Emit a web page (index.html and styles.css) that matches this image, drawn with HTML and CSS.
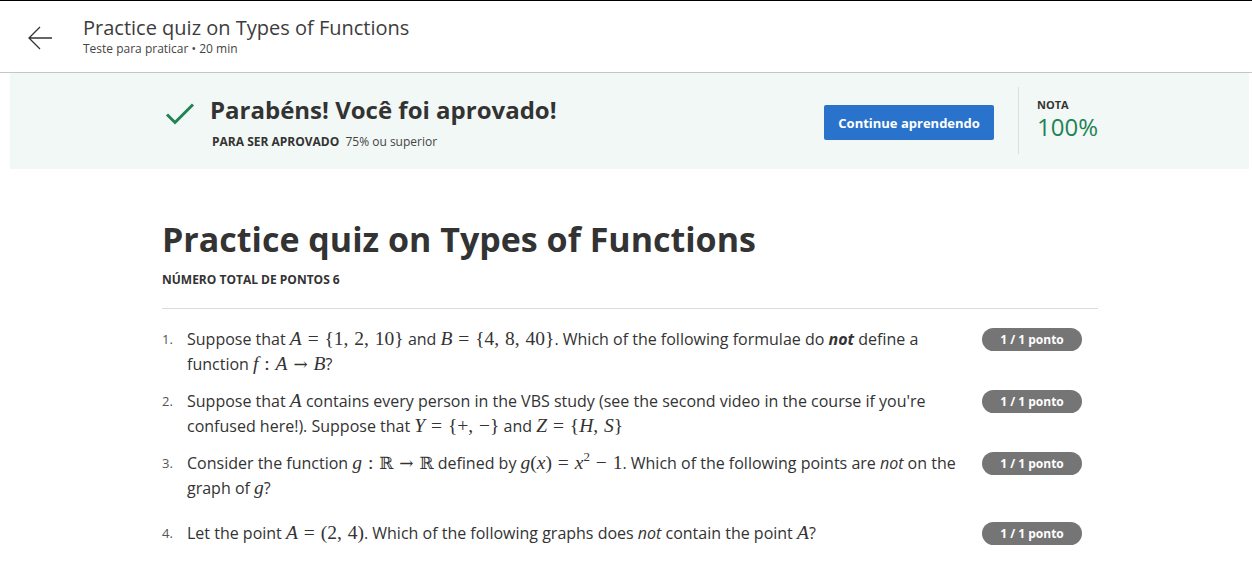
FILE: index.html
```html
<!DOCTYPE html>
<html lang="pt">
<head>
<meta charset="utf-8">
<title>Practice quiz on Types of Functions</title>
<link rel="stylesheet" href="styles.css">
</head>
<body>
<header class="topbar">
  <a class="back" aria-label="Voltar">
    <svg width="26" height="24" viewBox="0 0 26 24"><path d="M25 12H2M13 1L2 12l11 11" fill="none" stroke="#333" stroke-width="1.3"/></svg>
  </a>
  <div class="top-titles">
    <div class="top-title">Practice quiz on Types of Functions</div>
    <div class="top-sub">Teste para praticar • 20 min</div>
  </div>
</header>

<section class="banner">
  <div class="banner-inner">
    <div class="pass">
      <svg class="check" width="30" height="24" viewBox="0 0 30 24"><path d="M2 12.5l8 8L28 2.5" fill="none" stroke="#1f8354" stroke-width="3"/></svg>
      <div class="pass-text">
        <div class="pass-title">Parabéns! Você foi aprovado!</div>
        <div class="pass-req"><b>PARA SER APROVADO</b> 75% ou superior</div>
      </div>
    </div>
    <button class="continue">Continue aprendendo</button>
    <div class="divider"></div>
    <div class="grade">
      <div class="grade-label">NOTA</div>
      <div class="grade-value">100%</div>
    </div>
  </div>
</section>

<main class="content">
  <h1 class="quiz-title">Practice quiz on Types of Functions</h1>
  <div class="points">NÚMERO TOTAL DE PONTOS 6</div>
  <hr class="rule">
  <ol class="questions">
    <li class="q">
      <span class="num">1.</span>
      <div class="qtext">Suppose that <span class="m"><i>A</i> = {1, 2, 10}</span> and <span class="m"><i>B</i> = {4, 8, 40}</span>. Which of the following formulae do <b><i>not</i></b> define a function <span class="m"><i>f</i> : <i>A</i> <span class="arr">→</span> <i>B</i></span>?</div>
      <span class="badge">1 / 1 ponto</span>
    </li>
    <li class="q">
      <span class="num">2.</span>
      <div class="qtext">Suppose that <span class="m"><i>A</i></span> contains every person in the VBS study (see the second video in the course if you're confused here!). Suppose that <span class="m"><i>Y</i> = {+, −}</span> and <span class="m"><i>Z</i> = {<i>H</i>, <i>S</i>}</span></div>
      <span class="badge">1 / 1 ponto</span>
    </li>
    <li class="q q3">
      <span class="num">3.</span>
      <div class="qtext">Consider the function <span class="m"><i>g</i> : <span class="bb">ℝ</span> <span class="arr">→</span> <span class="bb">ℝ</span></span> defined by <span class="m"><i>g</i>(<i>x</i>) = <i>x</i><sup>2</sup> − 1</span>. Which of the following points are <i>not</i> on the graph of <span class="m"><i>g</i></span>?</div>
      <span class="badge">1 / 1 ponto</span>
    </li>
    <li class="q">
      <span class="num">4.</span>
      <div class="qtext">Let the point <span class="m"><i>A</i> = (2, 4)</span>. Which of the following graphs does <i>not</i> contain the point <span class="m"><i>A</i></span>?</div>
      <span class="badge">1 / 1 ponto</span>
    </li>
  </ol>
</main>
</body>
</html>
```

FILE: styles.css
```css
* { box-sizing: border-box; }
html, body { margin: 0; padding: 0; }
body {
  font-family: "Open Sans", "Liberation Sans", sans-serif;
  color: #333;
  background: #fff;
  border-top: 1px solid #000;
  width: 1252px;
  overflow: hidden;
}

.topbar {
  height: 72px;
  border-bottom: 1px solid #c6c6c6;
  display: flex;
  align-items: flex-start;
}
.back {
  display: block;
  margin: 25px 0 0 27px;
  width: 26px;
  height: 24px;
}
.back svg { display: block; }
.top-titles { margin: 14px 0 0 30px; }
.top-title {
  font-size: 20px;
  line-height: 26px;
  color: #3d3d3d;
}
.top-sub {
  font-size: 12px;
  line-height: 16px;
  color: #444;
}

.banner {
  margin: 0 3px 0 10px;
  height: 96px;
  background: #f2f8f6;
}
.banner-inner {
  width: 936px;
  margin: 0 0 0 152px;
  padding-left: 3px;
  height: 100%;
  display: flex;
  align-items: flex-start;
}
.pass {
  display: flex;
  align-items: flex-start;
  width: 660px;
}
.check { margin-top: 29px; display: block; }
.pass-text { margin: 20px 0 0 15px; }
.pass-title {
  font-size: 24px;
  font-weight: 700;
  line-height: 34px;
  color: #333;
}
.pass-req {
  font-size: 12px;
  line-height: 16px;
  margin: 7px 0 0 2px;
  color: #444;
}
.pass-req b { color: #333; margin-right: 3px; }
.continue {
  margin-top: 32px;
  width: 170px;
  height: 35px;
  border: none;
  border-radius: 2px;
  background: #2a73cc;
  color: #fff;
  font-family: "Open Sans", "Liberation Sans", sans-serif;
  font-size: 13px;
  font-weight: 700;
  padding: 0;
}
.divider {
  width: 1px;
  height: 67px;
  background: #dedede;
  margin: 14px 0 0 24px;
}
.grade { margin: 24px 0 0 18px; }
.grade-label {
  font-size: 11px;
  font-weight: 700;
  line-height: 16px;
  color: #333;
}
.grade-value {
  font-size: 24px;
  line-height: 28px;
  color: #1f8354;
}

.content {
  width: 936px;
  margin: 0 0 0 162px;
  padding-top: 46px;
}
.quiz-title {
  margin: 0;
  font-size: 34px;
  font-weight: 700;
  line-height: 48px;
  color: #333;
}
.points {
  font-size: 12px;
  font-weight: 700;
  line-height: 16px;
  margin-top: 9px;
  color: #333;
}
.rule {
  margin: 20px 0 0 0;
  border: none;
  border-top: 1px solid #dcdcdc;
  height: 0;
}
.questions {
  list-style: none;
  margin: 18px 0 0 0;
  padding: 0;
}
.q {
  display: flex;
  align-items: flex-start;
  margin-bottom: 12px;
}
.q3 { margin-bottom: 20px; }
.num {
  width: 25px;
  font-size: 13px;
  line-height: 25px;
  color: #555;
  flex: none;
}
.qtext {
  width: 790px;
  font-size: 16px;
  line-height: 25px;
  color: #333;
}
.badge {
  flex: none;
  margin: 1px 0 0 5px;
  width: 100px;
  height: 23px;
  border-radius: 12px;
  background: #757575;
  color: #fff;
  font-size: 12px;
  font-weight: 700;
  line-height: 23px;
  text-align: center;
}

.m {
  font-family: "Liberation Serif", "DejaVu Serif", serif;
  font-size: 19.5px;
  line-height: 20px;
  white-space: nowrap;
  word-spacing: 1px;
}
.m i { font-style: italic; }
.arr { font-family: "DejaVu Serif", serif; font-size: 17px; }
.bb { font-family: "DejaVu Serif", serif; font-size: 17px; }
.m sup { font-size: 13px; line-height: 10px; vertical-align: 8px; }
```
